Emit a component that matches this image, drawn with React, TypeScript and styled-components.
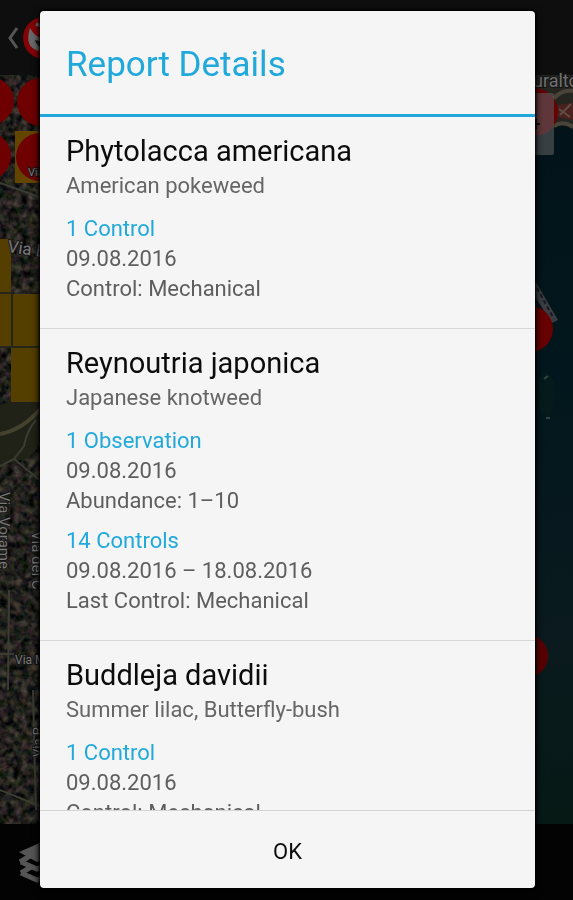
import React from "react";
import styled, { createGlobalStyle } from "styled-components";

const GlobalStyle = createGlobalStyle`
  *, *::before, *::after { box-sizing: border-box; }
  body {
    margin: 0;
    background: #000;
    font-family: Roboto, "Liberation Sans", sans-serif;
  }
`;

const accent = "#21a9db";

const Screen = styled.div`
  display: flex;
  flex-direction: column;
  height: 100vh;
  overflow: hidden;
`;

const ActionBar = styled.header`
  display: flex;
  align-items: center;
  flex: 0 0 75px;
  background: #0e0e0e;
`;

const BackButton = styled.button`
  display: flex;
  padding: 0 0 0 6px;
  border: 0;
  background: none;
`;

const MapArea = styled.main`
  display: flex;
  justify-content: space-between;
  flex: 1;
  min-height: 0;
  background: #03171d;
`;

const MapDrawing = styled.svg`
  display: block;
  flex: none;
  height: 100%;
  font-family: Roboto, "Liberation Sans", sans-serif;
`;

const BottomBar = styled.footer`
  display: flex;
  align-items: center;
  flex: 0 0 76px;
  background: #030303;
`;

const LayersButton = styled.button`
  display: flex;
  padding: 0 0 0 16px;
  border: 0;
  background: none;
`;

const Overlay = styled.div`
  position: fixed;
  inset: 0;
  display: flex;
  padding: 11px 38px 12px 40px;
`;

const Dialog = styled.section`
  display: flex;
  flex-direction: column;
  flex: 1;
  min-width: 0;
  overflow: hidden;
  border-radius: 4px;
  background: #f5f5f5;
  box-shadow: 0 0 3px 1px #000, 0 3px 8px #000;
`;

const DialogTitle = styled.h1`
  flex: none;
  margin: 0;
  padding: 32px 26px 27px;
  border-bottom: 3px solid ${accent};
  color: ${accent};
  font-size: 35px;
  font-weight: 400;
  line-height: 44px;
`;

const ReportList = styled.ul`
  flex: 1;
  min-height: 0;
  margin: 0;
  padding: 0;
  overflow-y: auto;
  scrollbar-width: none;
  list-style: none;
`;

const ReportItem = styled.li`
  padding: 15px 26px 24px;
  border-bottom: 1px solid #d8d8d8;
`;

const SpeciesName = styled.h2`
  margin: 0;
  color: #0c0c0c;
  font-size: 29px;
  font-weight: 400;
  line-height: 38px;
`;

const CommonName = styled.p`
  margin: 0 0 12px;
  color: #666;
  font-size: 22px;
  line-height: 32px;
`;

const Entry = styled.div`
  font-size: 22px;
  line-height: 30px;

  & + & {
    margin-top: 10px;
  }
`;

const EntryLine = styled.p<{ $accent?: boolean }>`
  margin: 0;
  color: ${(p) => (p.$accent ? accent : "#5e5e5e")};
`;

const OkButton = styled.button`
  flex: 0 0 78px;
  padding: 4px 0 0;
  border: 0;
  border-top: 1px solid #d4d4d4;
  background: transparent;
  color: #0c0c0c;
  font-family: inherit;
  font-size: 22px;
  line-height: 30px;
`;

const reports = [
  {
    name: "Phytolacca americana",
    common: "American pokeweed",
    entries: [{ title: "1 Control", lines: ["09.08.2016", "Control: Mechanical"] }],
  },
  {
    name: "Reynoutria japonica",
    common: "Japanese knotweed",
    entries: [
      { title: "1 Observation", lines: ["09.08.2016", "Abundance: 1–10"] },
      { title: "14 Controls", lines: ["09.08.2016 – 18.08.2016", "Last Control: Mechanical"] },
    ],
  },
  {
    name: "Buddleja davidii",
    common: "Summer lilac, Butterfly-bush",
    entries: [{ title: "1 Control", lines: ["09.08.2016", "Control: Mechanical"] }],
  },
];

function TownMap() {
  return (
    <MapDrawing width="60" viewBox="0 75 60 749" preserveAspectRatio="xMinYMin slice" aria-hidden="true">
      <defs>
        <filter id="terrain" x="0" y="0" width="100%" height="100%" colorInterpolationFilters="sRGB">
          <feTurbulence type="fractalNoise" baseFrequency="0.14" numOctaves="3" seed="8" />
          <feColorMatrix values="0.45 0.15 0 0 -0.17  0.3 0.25 0 0 -0.15  0.3 0.1 0.1 0 -0.14  0 0 0 0 1" />
        </filter>
      </defs>
      <rect y="75" width="60" height="749" fill="#1d211b" />
      <rect y="75" width="60" height="749" filter="url(#terrain)" />
      <path d="M0 405 L40 390 V440 L30 458 L13 462 L0 466Z" fill="#202217" />
      <g fill="none" stroke="#3b3c32" strokeWidth="2">
        <path d="M0 183 L20 190 L42 198" />
        <path d="M0 434 Q23 430 42 407" stroke="#45412f" strokeWidth="4" />
        <path d="M36 420 Q27 430 24 446 L14 459 L0 466 M14 459 L42 482" />
        <path d="M0 654 H14 M8 690 L9 590 M0 790 L42 807 M33 690 L36 810" />
      </g>
      <g fill="#543e00">
        <rect y="239" width="11" height="53" />
        <rect y="294" width="11" height="52" />
        <rect x="13" y="294" width="42" height="52" />
        <rect x="11" y="348" width="45" height="54" />
        <rect x="15" y="131" width="41" height="52" fill="#644500" />
      </g>
      <path d="M0 293 H12 V347 H0 M12 347 H42" fill="none" stroke="#242716" strokeWidth="2" />
      <g fill="#6e0002">
        <circle cx="-10" cy="101" r="24" />
        <circle cx="41" cy="102" r="24" />
        <circle cx="-13" cy="156" r="24" />
        <circle cx="40" cy="157" r="24" />
      </g>
      <g fill="#777" stroke="#161616" strokeWidth="2" paintOrder="stroke" fontSize="15">
        <text x="28" y="176" fontSize="11">Via</text>
        <text x="7" y="252" fontSize="17" transform="rotate(8 7 252)">Via B</text>
        <text x="15" y="664" fontSize="12">Via M</text>
        <text transform="translate(-1 492) rotate(90)">Via Vorame</text>
        <text transform="translate(32 531) rotate(90)">Via dei C</text>
        <text transform="translate(42 757) rotate(-90)" fontSize="13">Via P</text>
      </g>
    </MapDrawing>
  );
}

function LakeMap() {
  return (
    <MapDrawing width="60" viewBox="513 75 60 749" preserveAspectRatio="xMaxYMin slice" overflow="visible" aria-hidden="true">
      <defs>
        <linearGradient id="lake" x1="0" y1="0" x2="0" y2="1">
          <stop offset="0" stopColor="#021318" />
          <stop offset="0.4" stopColor="#02171d" />
          <stop offset="0.75" stopColor="#0a1a1e" />
          <stop offset="1" stopColor="#061915" />
        </linearGradient>
      </defs>
      <rect x="513" y="75" width="60" height="749" fill="url(#lake)" />
      <path d="M513 75 H573 V129 Q560 121 548 132 L513 140Z" fill="#25251f" />
      <path d="M553 99 Q562 89 573 91 M554 126 Q563 120 573 127" fill="none" stroke="#49443a" strokeWidth="4" />
      <path d="M558 105 L573 103 V120 L556 117Z" fill="#4a211e" />
      <path d="M559 109 L570 117 M571 104 L560 115" stroke="#5f4e43" strokeWidth="2" />
      <circle cx="534" cy="112" r="24" fill="#650003" />
      <rect x="508" y="93" width="46" height="62" rx="2" fill="#5b5b5f" fillOpacity="0.6" />
      <path d="M531 124 H540 M536 119 V129" stroke="#180d0d" strokeWidth="2" />
      <text x="533" y="87" fill="#707070" fontSize="18" stroke="#151515" strokeWidth="2" paintOrder="stroke">uralto</text>
      <path d="M534 279 L558 320 L552 323 L530 289Z" fill="#3b3d43" />
      <path d="M537 288 L554 319" stroke="#16191d" strokeWidth="2" strokeDasharray="4 3" />
      <circle cx="530" cy="329" r="23" fill="#670001" />
      <circle cx="526" cy="656" r="22" fill="#590002" />
      <ellipse cx="546" cy="394" rx="9" ry="22" fill="#0c221b" fillOpacity="0.3" />
      <path d="M544 379 L548 376 M546 418 H550" stroke="#34423d" strokeWidth="2" />
    </MapDrawing>
  );
}

export default function App() {
  return (
    <>
      <GlobalStyle />
      <Screen>
        <ActionBar>
          <BackButton aria-label="Back">
            <svg width="64" height="50" viewBox="6 12 64 50" aria-hidden="true">
              <path d="M17 27 L10 37 L17 47" fill="none" stroke="#555" strokeWidth="3" />
              <circle cx="44" cy="37" r="21" fill="#830307" />
              <path d="M30 27 Q25 43 34 48 Q38 51 44 49 L42 37 Q35 36 30 27Z" fill="#696969" />
              <path d="M35 39 Q36 44 44 49 V41Z" fill="#111" />
              <path d="M36 23 L44 26" stroke="#777" strokeWidth="3" />
            </svg>
          </BackButton>
        </ActionBar>
        <MapArea>
          <TownMap />
          <LakeMap />
        </MapArea>
        <BottomBar>
          <LayersButton aria-label="Layers">
            <svg width="44" height="44" viewBox="16 840 44 44" aria-hidden="true">
              <path d="M19 852 L42 842 L60 851 L37 862Z" fill="#555" />
              <path d="M21 862 L37 869 L58 860 M21 873 L37 880 L58 871" fill="none" stroke="#555" strokeWidth="5" />
              <path d="M30 856 L20 862 M31 867 L21 873" stroke="#555" strokeWidth="5" />
            </svg>
          </LayersButton>
        </BottomBar>
      </Screen>
      <Overlay>
        <Dialog role="dialog" aria-modal="true" aria-labelledby="report-title">
          <DialogTitle id="report-title">Report Details</DialogTitle>
          <ReportList>
            {reports.map((report) => (
              <ReportItem key={report.name}>
                <SpeciesName>{report.name}</SpeciesName>
                <CommonName>{report.common}</CommonName>
                {report.entries.map((entry) => (
                  <Entry key={entry.title}>
                    <EntryLine $accent>{entry.title}</EntryLine>
                    {entry.lines.map((line) => (
                      <EntryLine key={line}>{line}</EntryLine>
                    ))}
                  </Entry>
                ))}
              </ReportItem>
            ))}
          </ReportList>
          <OkButton type="button">OK</OkButton>
        </Dialog>
      </Overlay>
    </>
  );
}
